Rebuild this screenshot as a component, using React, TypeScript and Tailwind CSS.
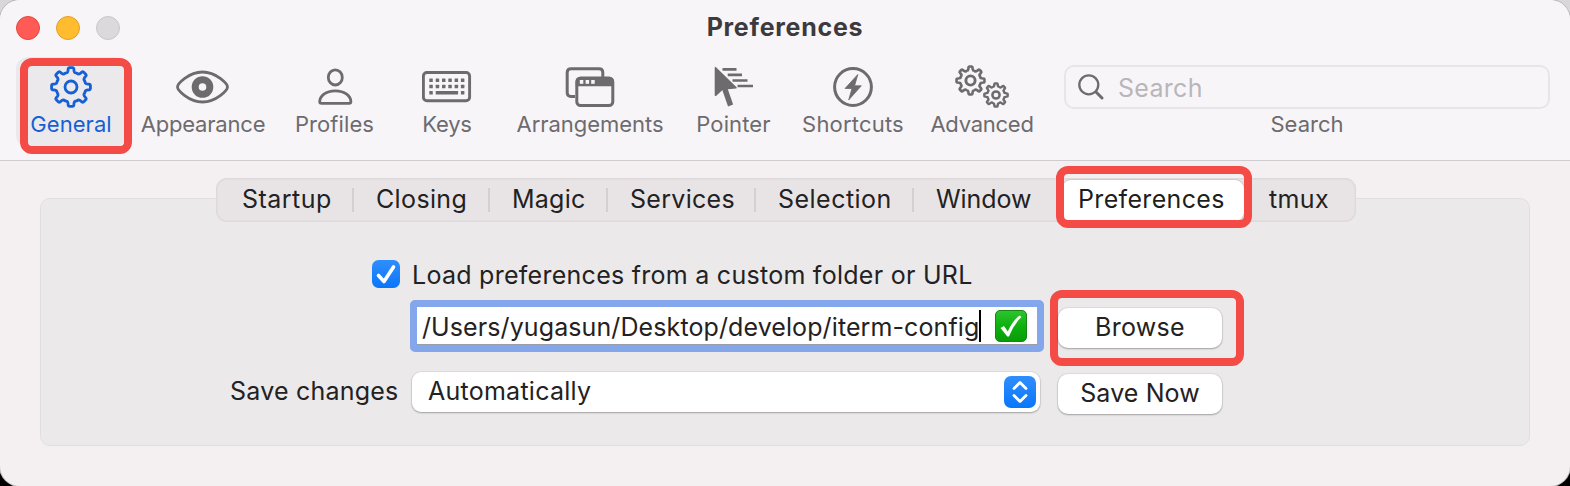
import type { ReactNode } from "react";

const polar = (cx: number, cy: number, r: number, deg: number) => {
  const a = ((deg - 90) * Math.PI) / 180;
  return `${(cx + r * Math.cos(a)).toFixed(2)} ${(cy + r * Math.sin(a)).toFixed(2)}`;
};

const gearPath = (cx: number, cy: number, outer: number, valley: number) => {
  let d = "";
  for (let i = 0; i < 8; i++) {
    const t = i * 45;
    const body = valley + (outer - valley) * 0.25;
    d += `${i === 0 ? "M" : "L"}${polar(cx, cy, body, t - 11)}`;
    d += `L${polar(cx, cy, outer - 0.8, t - 8.5)}Q${polar(cx, cy, outer, t - 8)} ${polar(cx, cy, outer, t - 5)}`;
    d += `L${polar(cx, cy, outer, t + 5)}Q${polar(cx, cy, outer, t + 8)} ${polar(cx, cy, outer - 0.8, t + 8.5)}`;
    d += `L${polar(cx, cy, body, t + 11)}`;
    d += `Q${polar(cx, cy, valley - 0.6, t + 14)} ${polar(cx, cy, valley, t + 22.5)}`;
    d += `Q${polar(cx, cy, valley - 0.6, t + 31)} ${polar(cx, cy, body, t + 34)}`;
  }
  return d + "Z";
};

const GearIcon = () => (
  <svg width="44" height="44" viewBox="0 0 44 44" fill="none" stroke="currentColor" strokeWidth="2.8" strokeLinejoin="round">
    <path d={gearPath(22, 22, 19.5, 15)} />
    <circle cx="22" cy="22" r="6" />
  </svg>
);

const EyeIcon = () => (
  <svg width="54" height="44" viewBox="0 0 54 44" fill="none" stroke="currentColor" strokeWidth="2.8" strokeLinejoin="round">
    <path d="M1.5 22C1.5 19 12.5 7 26.5 7S51.500 19 51.500 22S40.500 37 26.500 37S1.500 25 1.500 22Z" />
    <circle cx="26.500" cy="22" r="7.300" strokeWidth="7" />
  </svg>
);

const PersonIcon = () => (
  <svg width="36" height="44" viewBox="0 0 36 44" fill="none" stroke="currentColor" strokeWidth="2.8" strokeLinejoin="round">
    <ellipse cx="18.3" cy="12.4" rx="7" ry="7.6" />
    <path d="M4.500 38.300Q2.700 38.300 2.700 36.500C3 31 8.500 25.800 18.300 25.800S33.600 31 33.900 36.500Q33.900 38.300 32.100 38.300Z" />
  </svg>
);

const KeyboardIcon = () => (
  <svg width="50" height="44" viewBox="0.5 0 50 44" fill="none">
    <rect x="1.9" y="7.500" width="46.200" height="28.200" rx="3.500" stroke="currentColor" strokeWidth="2.900" />
    <g fill="currentColor">
      {[14, 20.2].map((y) =>
        [7.8, 14.2, 20.5, 26.8, 33.1, 39.4].map((x) => <rect key={`${x}-${y}`} x={x} y={y - 0.5} width="3.500" height="3.500" rx="0.500" />),
      )}
      <rect x="7.800" y="26" width="3.500" height="3.500" rx="0.500" />
      <rect x="14.200" y="26" width="22.400" height="3.500" rx="0.500" />
      <rect x="39.400" y="26" width="3.500" height="3.500" rx="0.500" />
    </g>
  </svg>
);

const WindowsIcon = () => (
  <svg width="50" height="44" viewBox="0 0 50 44" fill="none" stroke="currentColor" strokeWidth="3" strokeLinejoin="round">
    <path d="M10 31.500H6Q2.200 31.500 2.200 27.700V7.500Q2.200 3.700 6 3.700H34Q37.800 3.700 37.800 7.500V12" />
    <rect x="11.800" y="13" width="36" height="27.600" rx="3.800" />
    <path d="M11.500 20.500V16Q11.500 13 15 13H44.500Q48 13 48 16V20.500Z" fill="currentColor" strokeWidth="1.500" />
    <g fill="#f8f5f9" stroke="none">
      <rect x="14.800" y="15" width="3.500" height="3.800" />
      <rect x="20.600" y="15" width="3.500" height="3.800" />
      <rect x="26.200" y="15" width="3.500" height="3.800" />
    </g>
  </svg>
);

const PointerIcon = () => (
  <svg width="40" height="44" viewBox="0 0 40 44" fill="currentColor" stroke="currentColor">
    <path d="M1.500 2.700V30.300L8.500 24L22 22.800Z" strokeWidth="1.600" strokeLinejoin="round" />
    <path d="M10.500 23L16.600 40.500" strokeWidth="5.400" />
    <path d="M8.500 4.300H22.500M13.700 9.800H28M18.500 15.500H33.500M23.500 21H39" strokeWidth="2.700" />
  </svg>
);

const BoltIcon = () => (
  <svg width="44" height="44" viewBox="0 0 44 44" fill="none">
    <circle cx="22" cy="22" r="18.400" stroke="currentColor" strokeWidth="3" />
    <path d="M26.800 9.500L14 23.500H21L17.700 35L30.300 20.800H23.600Z" fill="currentColor" stroke="currentColor" strokeWidth="0.800" strokeLinejoin="round" />
  </svg>
);

const GearsIcon = () => (
  <svg width="56" height="44" viewBox="0 0 56 44" fill="none" stroke="currentColor" strokeLinejoin="round">
    <path d={gearPath(16.5, 15.5, 14, 10.5)} strokeWidth="2.600" />
    <circle cx="16.500" cy="15.500" r="4.600" strokeWidth="2.900" />
    <path d={gearPath(42, 30, 11.7, 8.8)} strokeWidth="2.400" />
    <circle cx="42" cy="30" r="3.600" strokeWidth="2.500" />
  </svg>
);

function ToolbarItem({ icon, label, className, textClass }: { icon: ReactNode; label: string; className: string; textClass: string }) {
  return (
    <div className={`flex h-[90px] shrink-0 flex-col items-center pt-2 ${className}`}>
      {icon}
      <span className={`mt-[3px] whitespace-nowrap text-[22px] leading-6 ${textClass}`}>{label}</span>
    </div>
  );
}

const tabs = [
  { label: "Startup", cls: "w-[138px] pl-[26px] tracking-[0.48px]", divider: true },
  { label: "Closing", cls: "w-[136px] pl-[22px] tracking-[0.36px]", divider: true },
  { label: "Magic", cls: "w-[118px] pl-[22px] tracking-[0.25px]", divider: true },
  { label: "Services", cls: "w-[148px] pl-[22px] tracking-[0.3px]", divider: true },
  { label: "Selection", cls: "w-[158px] pl-[22px] tracking-[0.48px]", divider: true },
  { label: "Window", cls: "w-[148px] pl-[22px] tracking-[-0.06px]", divider: false },
];

const button =
  "flex h-10 w-[164px] items-center justify-center rounded-[10px] bg-white text-[25px] shadow-[0_0_0_1px_rgba(0,0,0,0.05),0_1px_2px_rgba(0,0,0,0.28)]";

export default function App() {
  return (
    <div className="h-[486px] w-[1570px] overflow-hidden bg-linear-to-b from-[#d9d7da] from-20% to-black to-60% font-['Inter',sans-serif] text-[#232122]">
      <div className="flex h-full flex-col overflow-hidden rounded-[20px] bg-[#f4f0f1] shadow-[0_0_0_1px_#b9b7ba]">
        <header className="h-[161px] border-b border-[#cfccd0] bg-[#f8f5f9]">
          <div className="grid h-14 grid-cols-[1fr_auto_1fr] items-center px-4">
            <div className="flex gap-4">
              <span className="size-6 rounded-full border border-[#e2463f] bg-[#ff5b54]" />
              <span className="size-6 rounded-full border border-[#e0a028] bg-[#febc2e]" />
              <span className="size-6 rounded-full border border-[#c9c6ca] bg-[#dcd9dd]" />
            </div>
            <h1 className="-mt-px text-[25px] font-bold tracking-[0.74px] text-[#3c3a3d]">Preferences</h1>
          </div>
          <div className="mt-px flex pl-4 text-[#6d6b6e]">
            <div className="relative w-[110px] rounded-[12px] bg-[#ece9ec] text-[#1560d4]">
              <ToolbarItem icon={<GearIcon />} label="General" className="w-[110px]" textClass="tracking-[0.05px]" />
              <div className="absolute top-px left-1 h-24 w-28 rounded-[12px] border-8 border-[#f44b47]" />
            </div>
            <ToolbarItem icon={<EyeIcon />} label="Appearance" className="w-[154px]" textClass="tracking-[-0.19px]" />
            <ToolbarItem icon={<PersonIcon />} label="Profiles" className="w-[109px]" textClass="tracking-[0.1px]" />
            <ToolbarItem icon={<KeyboardIcon />} label="Keys" className="w-[116px]" textClass="tracking-[-0.22px]" />
            <ToolbarItem icon={<WindowsIcon />} label="Arrangements" className="w-[170px]" textClass="tracking-[-0.04px]" />
            <ToolbarItem icon={<PointerIcon />} label="Pointer" className="w-[117px]" textClass="tracking-[0.12px]" />
            <ToolbarItem icon={<BoltIcon />} label="Shortcuts" className="w-[122px]" textClass="tracking-[0.19px]" />
            <ToolbarItem icon={<GearsIcon />} label="Advanced" className="w-[136px]" textClass="tracking-[-0.25px]" />
            <ToolbarItem
              icon={
                <div className="flex h-11 w-[486px] shrink-0 items-center rounded-[10px] border-2 border-[#e8e5e9] pl-3">
                  <svg width="26" height="26" viewBox="0 0 26 26" fill="none" stroke="#6d6b6e" strokeLinecap="round">
                    <circle cx="10.800" cy="10.800" r="9.500" strokeWidth="2.300" />
                    <path d="M18 18L24 24" strokeWidth="3" />
                  </svg>
                  <span className="mt-[2px] ml-[14px] text-[25px] leading-8 tracking-[0.3px] text-[#b9b6ba]">Search</span>
                </div>
              }
              label="Search"
              className="ml-[14px] w-[486px]"
              textClass=""
            />
          </div>
        </header>

        <main className="flex flex-col px-10 pt-[17px]">
          <nav className="z-10 ml-[176px] flex h-11 w-[1140px] items-center rounded-[11px] bg-[#e8e4e5] text-[25px] shadow-[inset_0_0_0_1.5px_#dedadb]">
            {tabs.map((t) => (
              <div key={t.label} className={`flex h-6 items-center ${t.cls} ${t.divider ? "border-r-2 border-[#d3d0d1]" : ""}`}>
                <span className="-mt-[2px] leading-6">{t.label}</span>
              </div>
            ))}
            <div className="relative h-[41px] w-[182px] rounded-[9px] bg-white pl-4 leading-[38px] tracking-[0.34px] text-black/90 shadow-[0_0_0_1px_#d0cccd]">
              Preferences
              <div className="absolute -top-[14px] -left-[6px] h-[62px] w-[196px] rounded-[12px] border-8 border-[#f44b47]" />
            </div>
            <div className="-mt-[2px] pl-[25px] leading-[42px] tracking-[0.38px]">tmux</div>
          </nav>

          <section className="-mt-6 h-[248px] rounded-[10px] border-[1.5px] border-[#e1dedf] bg-[#ebe9ea] pt-[61px] text-[25px]">
            <div className="flex h-7 items-center pl-[331px]">
              <svg width="28" height="28" viewBox="0 0 28 28" fill="none">
                <defs>
                  <linearGradient id="blue" x1="0" y1="0" x2="0" y2="1">
                    <stop stopColor="#2f8efc" />
                    <stop offset="1" stopColor="#0a76fb" />
                  </linearGradient>
                </defs>
                <rect width="28" height="28" rx="6.500" fill="url(#blue)" />
                <path d="M6.500 15.500L12 21.500L21.500 7" stroke="white" strokeWidth="3.600" strokeLinecap="round" strokeLinejoin="round" />
              </svg>
              <span className="mt-[3px] ml-3 whitespace-nowrap tracking-[0.27px]">Load preferences from a custom folder or URL</span>
            </div>

            <div className="mt-[2px] flex h-[76px] items-start pl-[369px]">
              <div className="mt-[10px] flex h-[52px] w-[634px] items-center rounded-[5px] border-[7px] border-[#84a6ea] bg-white pl-[5px] shadow-[inset_0_-1px_0_#9a9da8]">
                <span className="mt-[3px] whitespace-nowrap tracking-[0.1px]">/Users/yugasun/Desktop/develop/iterm-config</span>
                <span className="h-8 w-[2px] bg-black" />
                <svg className="ml-[14px]" width="32" height="32" viewBox="0 0 32 32" fill="none">
                  <defs>
                    <linearGradient id="green" x1="0" y1="0" x2="0" y2="1">
                      <stop stopColor="#2fc42f" />
                      <stop offset="0.500" stopColor="#0db10d" />
                      <stop offset="1" stopColor="#089c0a" />
                    </linearGradient>
                  </defs>
                  <rect x="0.500" y="0.500" width="31" height="31" rx="4.500" fill="url(#green)" stroke="#15851a" />
                  <path d="M5.500 18L9 16L12.800 21.500Q17 11.500 24.500 5.500L26.500 7Q18.500 14.500 14 26.500H12.300Z" fill="white" />
                </svg>
              </div>
              <div className="ml-[6px] h-[76px] w-[194px] rounded-[12px] border-8 border-[#f44b47] pt-[10px]">
                <div className={`${button} tracking-[0.29px]`}><span className="-mt-px">Browse</span></div>
              </div>
            </div>

            <div className="mt-[6px] flex items-start pl-[189px]">
              <span className="w-[182px] whitespace-nowrap leading-[38px] tracking-[0.22px]">Save changes</span>
              <div className="flex h-10 w-[628px] items-center justify-between rounded-[9px] bg-white pr-1 pl-4 shadow-[0_0_0_1px_rgba(0,0,0,0.05),0_1px_2px_rgba(0,0,0,0.28)]">
                <span className="tracking-[0.25px]">Automatically</span>
                <svg width="32" height="32" viewBox="0 0 32 32" fill="none">
                  <rect width="32" height="32" rx="7" fill="url(#blue)" />
                  <path d="M10 12.500L16 6.500L22 12.500M10 19.500L16 25.500L22 19.500" stroke="white" strokeWidth="2.800" strokeLinecap="round" strokeLinejoin="round" />
                </svg>
              </div>
              <div className={`mt-[2px] ml-[18px] ${button} tracking-[0.11px]`}><span className="-mt-px">Save Now</span></div>
            </div>
          </section>
        </main>
      </div>
    </div>
  );
}
